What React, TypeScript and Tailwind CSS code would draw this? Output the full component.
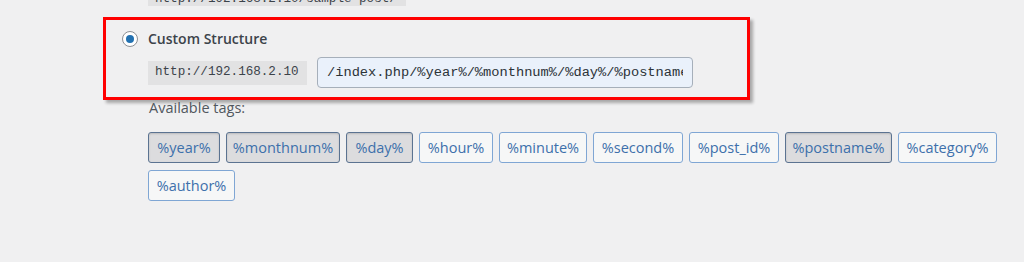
const tags = [
  { label: "%year%", active: true, width: "w-[72px]" },
  { label: "%monthnum%", active: true, width: "w-[114px]" },
  { label: "%day%", active: true, width: "w-[67px]" },
  { label: "%hour%", active: false, width: "w-[74px]" },
  { label: "%minute%", active: false, width: "w-[88px]" },
  { label: "%second%", active: false, width: "w-[90px]" },
  { label: "%post_id%", active: false, width: "w-[90px]" },
  { label: "%postname%", active: true, width: "w-[107px]" },
  { label: "%category%", active: false, width: "w-[99px]" },
  { label: "%author%", active: false, width: "w-[87px]" },
];

export default function App() {
  return (
    <div className="h-[262px] w-[1024px] overflow-hidden bg-[#f0f0f1] font-['Open_Sans','Noto_Sans',sans-serif] text-[#3c434a]">
      <div className="-mt-[18px] ml-[148px] flex h-[24px] w-[258px] items-end whitespace-nowrap bg-[#e2e2e3] px-[7px] font-['Liberation_Mono',monospace] text-[12.6px] leading-[13px] text-[#3c434a]">
        http://192.168.2.10/sample-post/
      </div>

      <div className="ml-[103px] mt-[11px] h-[83px] w-[647px] border-[3px] border-[#ff0000] shadow-[3px_3px_3px_rgba(0,0,0,0.3)]">
        <label className="ml-[16px] mt-[11px] flex items-center gap-[10px]">
          <span className="flex h-[16px] w-[16px] items-center justify-center rounded-full border border-[#8c8f94] bg-white">
            <span className="h-[8px] w-[8px] rounded-full bg-[#2271b1]" />
          </span>
          <span className="text-[14px] font-semibold leading-[16px] text-[#3c434a]">
            Custom Structure
          </span>
        </label>

        <div className="ml-[42px] mt-[10px] flex items-center gap-[10px]">
          <code className="flex h-[24px] w-[159px] items-center whitespace-nowrap bg-[#e2e2e3] px-[7px] font-['Liberation_Mono',monospace] text-[12.6px] text-[#3c434a]">
            http://192.168.2.10
          </code>
          <input
            readOnly
            value="/index.php/%year%/%monthnum%/%day%/%postname%/"
            className="h-[31px] w-[376px] rounded-[4px] border border-[#a6afba] bg-[#eaf1fb] px-[9px] font-['Liberation_Mono',monospace] text-[13.7px] text-[#2c3338] outline-none"
          />
        </div>
      </div>

      <p className="-mt-[1px] ml-[149px] text-[14.5px] leading-[18px] text-[#50575e]">
        Available tags:
      </p>

      <div className="ml-[148px] mt-[15px] flex w-[860px] flex-wrap gap-x-[6px] gap-y-[7px]">
        {tags.map((tag) => (
          <button
            key={tag.label}
            className={
              tag.active
                ? `${tag.width} h-[31px] rounded-[3px] border border-[#5b7391] bg-[#dcdcde] text-[14.5px] text-[#3d70ab] shadow-[inset_0_1px_2px_rgba(0,0,0,0.15)]`
                : `${tag.width} h-[31px] rounded-[3px] border border-[#7fa6d4] bg-[#f6f7f7] text-[14.5px] text-[#3d70ab]`
            }
          >
            {tag.label}
          </button>
        ))}
      </div>
    </div>
  );
}
